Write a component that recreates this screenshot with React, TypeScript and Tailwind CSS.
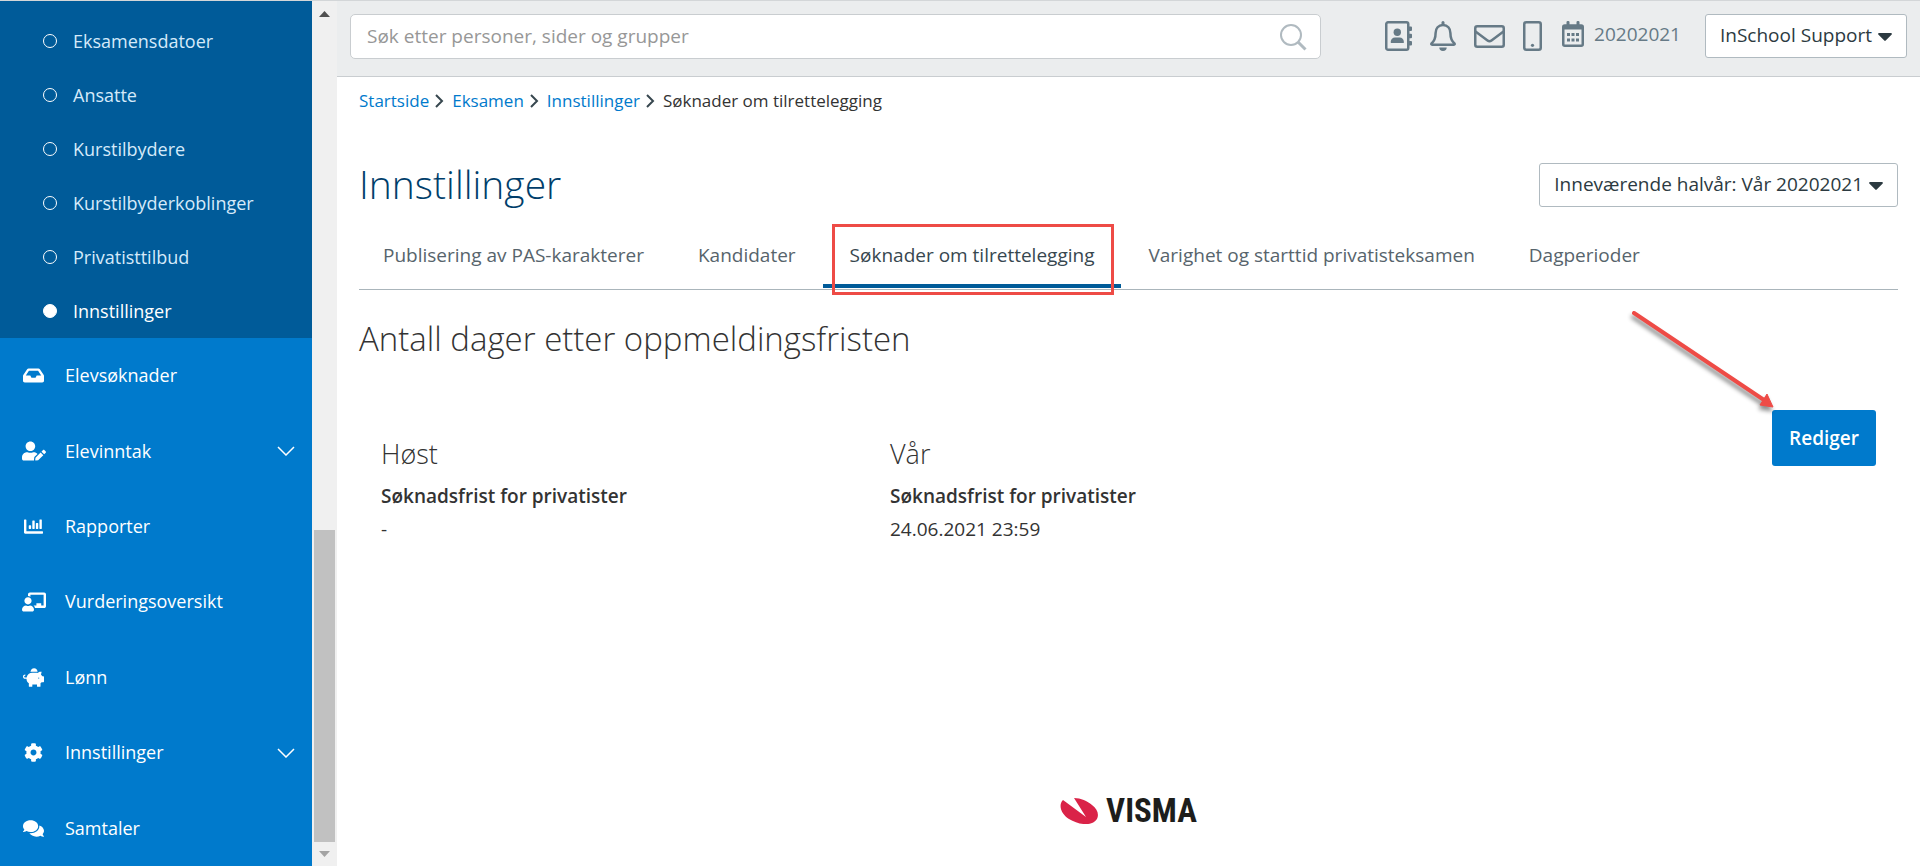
import React from 'react';
import {
  FaChalkboardTeacher,
  FaChartBar,
  FaCog,
  FaComments,
  FaInbox,
  FaPiggyBank,
  FaUserEdit,
} from 'react-icons/fa';
import type { IconType } from 'react-icons';

interface MenuItem {
  icon: IconType;
  label: string;
  size: number;
  expandable?: boolean;
}

const subMenu = [
  'Eksamensdatoer',
  'Ansatte',
  'Kurstilbydere',
  'Kurstilbyderkoblinger',
  'Privatisttilbud',
  'Innstillinger',
];

const menu: MenuItem[] = [
  { icon: FaInbox, label: 'Elevsøknader', size: 21 },
  { icon: FaUserEdit, label: 'Elevinntak', size: 24, expandable: true },
  { icon: FaChartBar, label: 'Rapporter', size: 19 },
  { icon: FaChalkboardTeacher, label: 'Vurderingsoversikt', size: 24 },
  { icon: FaPiggyBank, label: 'Lønn', size: 21 },
  { icon: FaCog, label: 'Innstillinger', size: 19, expandable: true },
  { icon: FaComments, label: 'Samtaler', size: 21 },
];

const crumbs = ['Startside', 'Eksamen', 'Innstillinger'];

const tabs = [
  'Publisering av PAS-karakterer',
  'Kandidater',
  'Søknader om tilrettelegging',
  'Varighet og starttid privatisteksamen',
  'Dagperioder',
];
const activeTab = 2;

const deadlines = [
  { term: 'Høst', value: '-' },
  { term: 'Vår', value: '24.06.2021 23:59' },
];

function AddressBookIcon() {
  return (
    <svg width="27" height="30" viewBox="0 0 27 30" fill="currentColor">
      <rect x="1.250" y="1.250" width="22" height="27.500" rx="1.800" fill="none" stroke="currentColor" strokeWidth="2.500" />
      <path d="M24 5.500h2a1 1 0 0 1 1 1v2.500a1 1 0 0 1-1 1h-2zM24 12.800h2a1 1 0 0 1 1 1v2.500a1 1 0 0 1-1 1h-2zM24 20h2a1 1 0 0 1 1 1v2.500a1 1 0 0 1-1 1h-2z" />
      <circle cx="12.300" cy="11.300" r="3.700" />
      <path d="M5.800 22v-1.500c0-2.300 1.800-4 4.200-4h4.600c2.400 0 4.200 1.700 4.200 4V22z" />
    </svg>
  );
}

function BellIcon() {
  return (
    <svg width="26" height="30" viewBox="0 0 26 30" fill="currentColor">
      <rect x="11.500" width="3" height="5" rx="1.500" />
      <path
        d="M13 4c-4.600 0-7.400 3.400-7.400 8 0 5.500-1.200 8-4.100 10.500-.4.600-.2 1.200.6 1.200h21.800c.8 0 1-.6.6-1.200-2.900-2.500-4.100-5-4.100-10.500 0-4.600-2.800-8-7.400-8z"
        fill="none"
        stroke="currentColor"
        strokeWidth="2.500"
      />
      <path d="M9.300 26.500h7.400a3.700 3.400 0 0 1-7.400 0z" />
    </svg>
  );
}

function EnvelopeIcon() {
  return (
    <svg width="31" height="23" viewBox="0 0 31 23" fill="none" stroke="currentColor" strokeWidth="2.500">
      <rect x="1.250" y="1.250" width="28.500" height="20.500" rx="2" />
      <path d="M1.500 6.500l12 9a3.300 3.300 0 0 0 4 0l12-9" />
    </svg>
  );
}

function MobileIcon() {
  return (
    <svg width="19" height="30" viewBox="0 0 19 30" fill="none" stroke="currentColor" strokeWidth="2.500">
      <rect x="1.250" y="1.250" width="16.500" height="27.500" rx="2" />
      <circle cx="9.500" cy="24.300" r="1.600" fill="currentColor" stroke="none" />
    </svg>
  );
}

function CalendarIcon() {
  return (
    <svg width="22" height="26" viewBox="0 0 22 26" fill="currentColor">
      <path d="M5 1a1 1 0 0 1 2 0v3H5zM15 1a1 1 0 0 1 2 0v3h-2z" stroke="currentColor" />
      <rect x="1.250" y="4.500" width="19.500" height="20.250" rx="1.500" fill="none" stroke="currentColor" strokeWidth="2.500" />
      <path d="M1 4.500h20v4H1z" />
      <path d="M5 12h3v3H5zM9.500 12h3v3h-3zM14 12h3v3h-3zM5 17.500h3v3H5zM9.500 17.500h3v3h-3zM14 17.500h3v3h-3z" />
    </svg>
  );
}

function Caret() {
  return (
    <svg width="14" height="8" viewBox="0 0 14 8" fill="currentColor" className="mt-1" aria-hidden="true">
      <path d="M1 0h12a1 1 0 0 1 .7 1.600L7.700 7.600a1 1 0 0 1-1.400 0L.3 1.600A1 1 0 0 1 1 0z" />
    </svg>
  );
}

function DropdownButton({ label }: { label: string }) {
  return (
    <button
      type="button"
      className="flex h-11 items-center gap-1.5 rounded-[3px] border border-[#b0bac0] bg-white px-3.5 pb-0.5 text-[19px] font-medium text-[#2c3a41]"
    >
      {label}
      <Caret />
    </button>
  );
}

function Sidebar() {
  return (
    <nav className="flex w-[312px] shrink-0 flex-col bg-[#007acc] text-[18px] text-white" aria-label="Hovedmeny">
      <ul className="bg-[#005b99] pt-[13px]">
        {subMenu.map((label, i) => {
          const active = i === subMenu.length - 1;
          return (
            <li key={label}>
              <a
                href="#"
                className={`flex h-[54px] items-center gap-4 pl-[43px] ${active ? 'text-white' : 'text-[#d5eafa]'}`}
              >
                <span className={`size-3.5 rounded-full border border-white ${active ? 'bg-white' : ''}`} />
                {label}
              </a>
            </li>
          );
        })}
      </ul>
      <ul className="flex flex-1 flex-col">
        {menu.map(({ icon: Icon, label, size, expandable }) => (
          <li key={label} className="flex flex-1">
            <a href="#" className="flex flex-1 items-center pr-[17px] pl-5">
              <span className="mr-[18px] flex w-[27px] justify-center">
                <Icon size={size} />
              </span>
              <span className="flex-1">{label}</span>
              {expandable && (
                <svg width="18" height="10" viewBox="0 0 18 10" fill="none" stroke="currentColor" strokeWidth="1.500">
                  <path d="M1 1l8 8 8-8" />
                </svg>
              )}
            </a>
          </li>
        ))}
      </ul>
    </nav>
  );
}

function Scrollbar() {
  return (
    <div className="flex w-[25px] shrink-0 flex-col items-center bg-[#f0f0f0] pt-2.5 pb-[9px]" aria-hidden="true">
      <svg width="11" height="6" viewBox="0 0 11 6" className="fill-[#505050]">
        <path d="M5.500 0L11 6H0z" />
      </svg>
      <div className="flex w-[21px] flex-1 flex-col pt-[513px] pb-[9px]">
        <div className="flex-1 bg-[#c1c1c1]" />
      </div>
      <svg width="11" height="6" viewBox="0 0 11 6" className="fill-[#a3a3a3]">
        <path d="M0 0h11L5.500 6z" />
      </svg>
    </div>
  );
}

function Header() {
  return (
    <header className="flex h-[76px] items-start border-b border-[#c9cdd0] bg-[#ebedee] px-[13px] pt-[13px] text-[#667a86]">
      <label className="flex h-[45px] max-w-[971px] flex-1 items-center rounded-[5px] border border-[#c9cdd0] bg-white pr-[13px] pl-4">
        <input
          type="search"
          aria-label="Søk"
          placeholder="Søk etter personer, sider og grupper"
          className="flex-1 bg-transparent text-[19px] outline-none placeholder:text-[#979797]"
        />
        <svg width="28" height="28" viewBox="0 0 28 28" fill="none" stroke="#b0bac0" strokeWidth="2">
          <circle cx="12" cy="12" r="10" />
          <path d="M19 19l7.500 7.500" strokeWidth="3" />
        </svg>
      </label>
      <div className="ml-auto flex h-11 items-center gap-[18px]">
        <button type="button" aria-label="Kontakter">
          <AddressBookIcon />
        </button>
        <button type="button" aria-label="Varsler">
          <BellIcon />
        </button>
        <button type="button" aria-label="Meldinger">
          <EnvelopeIcon />
        </button>
        <button type="button" aria-label="SMS">
          <MobileIcon />
        </button>
        <button type="button" className="flex items-center gap-2.5 pb-1 pl-0.5 text-[19px]">
          <CalendarIcon />
          20202021
        </button>
      </div>
      <div className="ml-6">
        <DropdownButton label="InSchool Support" />
      </div>
    </header>
  );
}

function VismaLogo() {
  return (
    <div className="flex items-center gap-2">
      <svg width="38" height="26" viewBox="0 0 38 26" fill="#da2348" aria-hidden="true">
        <path d="M3 2C-2 7 1 16 9 21c8 5 19 7 25 3 6-4 5-12-2-17C27 3 21 0 14 0l12 19z" />
      </svg>
      <span className="font-['Roboto_Condensed','Roboto',sans-serif] text-[33px] leading-[30px] font-bold text-[#1d1d1b]">
        VISMA
      </span>
    </div>
  );
}

function Breadcrumbs() {
  return (
    <nav className="mt-3 flex h-6 items-center text-[17px]" aria-label="Brødsmulesti">
      {crumbs.map((c) => (
        <React.Fragment key={c}>
          <a href="#" className="text-[#007acc]">
            {c}
          </a>
          <svg width="9" height="14" viewBox="0 0 9 14" fill="none" stroke="#37474f" strokeWidth="2" className="mr-2 ml-1.5">
            <path d="M1 1l6 6-6 6" />
          </svg>
        </React.Fragment>
      ))}
      <span className="font-medium">Søknader om tilrettelegging</span>
    </nav>
  );
}

function Tabs() {
  return (
    <div
      role="tablist"
      className="mt-[23px] flex h-[60px] border-b border-[#aab5bb] text-[19px] whitespace-nowrap text-[#57646c]"
    >
      {tabs.map((t, i) => {
        const active = i === activeTab;
        return (
          <button
            key={t}
            type="button"
            role="tab"
            aria-selected={active}
            className={`relative px-[27px] pb-2 first:pl-6 ${active ? 'text-[#37474f]' : ''}`}
          >
            {t}
            {active && (
              <>
                <span className="absolute inset-x-0 bottom-px h-1 bg-[#005b99]" />
                <span className="absolute -inset-y-1.5 right-[7px] left-[9px] border-[3px] border-[#ee4b46]" />
              </>
            )}
          </button>
        );
      })}
    </div>
  );
}

function Arrow() {
  return (
    <svg
      width="150"
      height="105"
      viewBox="0 0 150 105"
      className="pointer-events-none absolute right-full bottom-full overflow-visible drop-shadow-[-1px_4px_2px_rgba(0,0,0,0.45)]"
      aria-hidden="true"
    >
      <path d="M12 8l130 87" stroke="#ee4b46" strokeWidth="4" strokeLinecap="round" />
      <path d="M151 102l-13-2 7-11z" fill="#ee4b46" stroke="#ee4b46" strokeWidth="1" />
    </svg>
  );
}

export default function App() {
  return (
    <div className="flex min-h-screen border-t border-[#d3d6d8] bg-white font-['Open_Sans',sans-serif] text-[#333]">
      <Sidebar />
      <Scrollbar />
      <div className="flex min-w-0 flex-1 flex-col">
        <Header />
        <main className="flex flex-1 flex-col px-[22px]">
          <Breadcrumbs />
          <div className="mt-[50px] flex h-11 items-center justify-between">
            <h1 className="pb-0.5 text-[39px] leading-[44px] font-light text-[#003e6b]">Innstillinger</h1>
            <DropdownButton label="Inneværende halvår: Vår 20202021" />
          </div>
          <Tabs />
          <h2 className="mt-[26px] text-[33px] leading-[46px] font-light">Antall dager etter oppmeldingsfristen</h2>
          <section className="mx-1.5 mt-12 grid grid-cols-3">
            {deadlines.map((d) => (
              <div key={d.term} className="px-4 pt-6 text-[19px] leading-[33px]">
                <h3 className="mb-1.5 text-[27px] leading-[40px] font-light">{d.term}</h3>
                <p className="font-semibold">Søknadsfrist for privatister</p>
                <p>{d.value}</p>
              </div>
            ))}
            <div className="flex items-start justify-end px-4">
              <div className="relative">
                <Arrow />
                <button
                  type="button"
                  className="h-14 rounded-[3px] bg-[#007acc] px-[17px] text-[19px] font-semibold text-white"
                >
                  Rediger
                </button>
              </div>
            </div>
          </section>
          <footer className="mt-auto flex justify-center pb-10">
            <VismaLogo />
          </footer>
        </main>
      </div>
    </div>
  );
}
